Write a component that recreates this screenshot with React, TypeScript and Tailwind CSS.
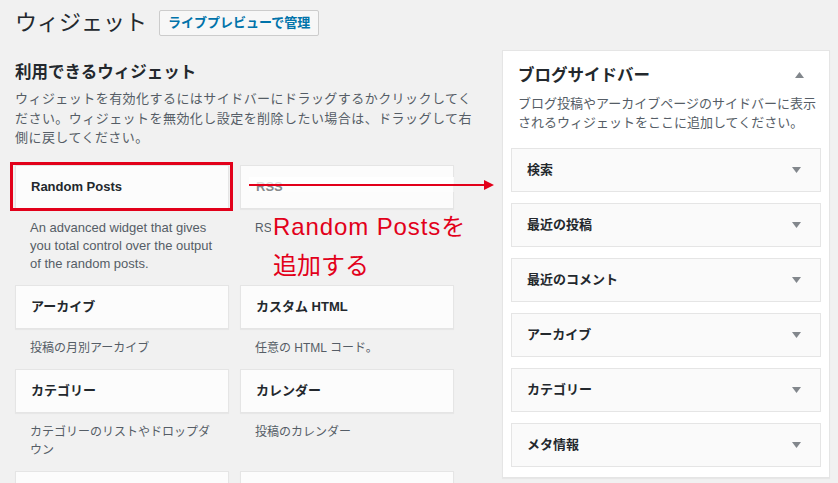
import React from "react";

const font = { fontFamily: '"Liberation Sans", "Noto Sans CJK JP", sans-serif' };

type W = { title: string; desc: string; latin?: boolean };

const widgets: W[] = [
  { title: "Random Posts", desc: "An advanced widget that gives you total control over the output of the random posts.", latin: true },
  { title: "RSS", desc: "RSS/Atom フィードのエントリー" },
  { title: "アーカイブ", desc: "投稿の月別アーカイブ" },
  { title: "カスタム HTML", desc: "任意の HTML コード。" },
  { title: "カテゴリー", desc: "カテゴリーのリストやドロップダウン" },
  { title: "カレンダー", desc: "投稿のカレンダー" },
  { title: "ギャラリー", desc: "画像ギャラリーを表示します。" },
  { title: "テキスト", desc: "任意のテキスト。" },
];

const sidebarItems = ["検索", "最近の投稿", "最近のコメント", "アーカイブ", "カテゴリー", "メタ情報"];

function Tri({ up }: { up?: boolean }) {
  return (
    <svg width="9" height="6" viewBox="0 0 9 6" className="shrink-0">
      {up ? <polygon points="4.5,0 9,6 0,6" fill="#82878c" /> : <polygon points="0,0 9,0 4.5,6" fill="#82878c" />}
    </svg>
  );
}

export default function App() {
  return (
    <div className="relative w-[838px] h-[483px] overflow-hidden bg-[#f1f1f1] text-[#23282d]" style={font}>
      {/* header */}
      <div className="flex items-center pl-[15px] pt-[10px] h-[36px]">
        <h1 className="text-[22px] leading-[26px] font-normal text-[#23282d]">ウィジェット</h1>
        <div className="ml-[12px] h-[26px] px-[8px] flex items-center border border-[#cccccc] bg-[#f7f7f7] rounded-[2px] text-[13px] font-bold text-[#0073aa]">
          ライブプレビューで管理
        </div>
      </div>

      <div className="flex mt-[14px]">
        {/* left column */}
        <div className="ml-[15px] w-[456px]">
          <h2 className="mt-[10px] text-[16.5px] leading-[24px] font-bold text-[#23282d]">利用できるウィジェット</h2>
          <p className="mt-[5px] w-[462px] text-[13px] leading-[19.5px] tracking-[0.45px] text-[#555d66]">
            ウィジェットを有効化するにはサイドバーにドラッグするかクリックしてください。ウィジェットを無効化し設定を削除したい場合は、ドラッグして右側に戻してください。
          </p>
          <div className="mt-[17px] grid grid-cols-[214px_214px] gap-x-[11px]">
            {widgets.map((w) => (
              <div key={w.title}>
                <div className="h-[44px] bg-[#fcfcfc] border border-[#e5e5e5] shadow-[0_1px_1px_rgba(0,0,0,0.04)] flex items-center px-[15px] text-[13px] font-bold text-[#23282d]">
                  {w.title}
                </div>
                <div
                  className={
                    w.latin
                      ? "px-[15px] pt-[10px] pb-[12px] text-[13px] leading-[18px] text-[#555d66]"
                      : "px-[15px] pt-[10px] pb-[12px] text-[12px] leading-[18px] text-[#555d66]"
                  }
                >
                  {w.desc}
                </div>
              </div>
            ))}
          </div>
        </div>

        {/* right panel */}
        <div className="ml-[31px] w-[328px] h-[428px] bg-white border border-[#e5e5e5] shadow-[0_1px_1px_rgba(0,0,0,0.04)] pt-[13px] px-[8px] pb-[11px]">
          <div className="flex items-center justify-between pl-[7px] pr-[17px] h-[22px]">
            <span className="text-[16.5px] leading-[22px] font-bold text-[#23282d]">ブログサイドバー</span>
            <Tri up />
          </div>
          <p className="pl-[7px] pr-[4px] mt-[9px] text-[13px] leading-[18.5px] text-[#555d66]">
            ブログ投稿やアーカイブページのサイドバーに表示されるウィジェットをここに追加してください。
          </p>
          <div className="mt-[16px] flex flex-col gap-[11px]">
            {sidebarItems.map((s) => (
              <div
                key={s}
                className="h-[44px] bg-[#fafafa] border border-[#e5e5e5] flex items-center justify-between pl-[15px] pr-[19px] text-[13px] font-bold text-[#23282d]"
              >
                <span>{s}</span>
                <Tri />
              </div>
            ))}
          </div>
        </div>
      </div>

      {/* annotations */}
      <div className="absolute left-[10px] top-[162px] w-[223px] h-[49px] border-[3px] border-[#e2001a] pointer-events-none" />
      <svg className="absolute left-[240px] top-[170px] pointer-events-none" width="260" height="30" viewBox="0 0 260 30">
        <rect x="9" y="7" width="205" height="8" fill="#ffffff" opacity="0.85" />
        <rect x="9" y="15" width="205" height="7" fill="#ffffff" opacity="0.45" />
        <line x1="9" y1="15" x2="246" y2="15" stroke="#e2001a" strokeWidth="2" />
        <polygon points="244,10 254,15 244,20" fill="#e2001a" />
      </svg>
      <div
        className="absolute left-[271px] top-[207px] text-[24px] leading-[39px] text-[#e2001a] pointer-events-none"
        style={{ fontFamily: '"Liberation Sans", "Noto Sans CJK JP", sans-serif' }}
      >
        <div>
          <span className="bg-[#f1f1f1] pl-[2px]">
            <span className="tracking-[0.9px]">Random Posts</span>を
          </span>
        </div>
        <div className="pl-[2px]">追加する</div>
      </div>
    </div>
  );
}
